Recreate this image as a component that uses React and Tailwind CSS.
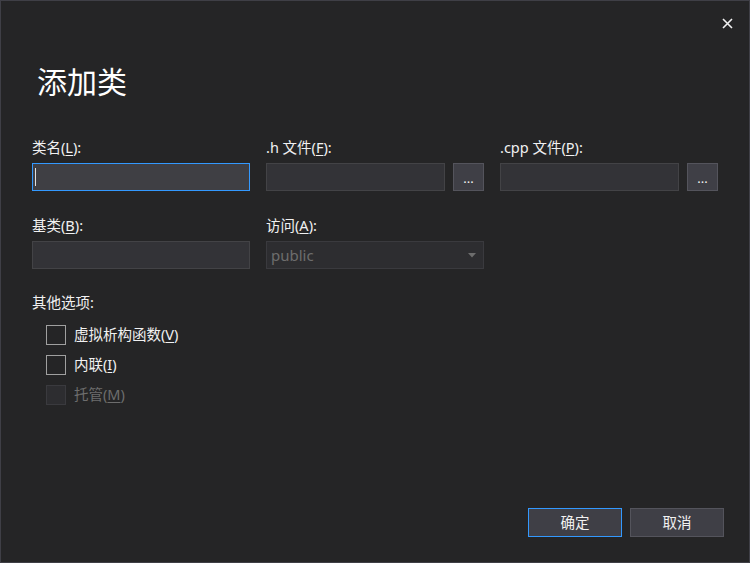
import React from "react";

const font = { fontFamily: '"Noto Sans", "Noto Sans CJK SC", sans-serif' };

function Label({ children }) {
  return <div className="h-5 text-[14.5px] leading-5 text-[#f1f1f1]">{children}</div>;
}

function Key({ children }) {
  return <span className="underline underline-offset-2">{children}</span>;
}

function Browse() {
  return (
    <button className="w-[31px] h-[28px] shrink-0 bg-[#3f3f46] border border-[#54545c] text-[#f1f1f1] text-[13px] leading-none pt-[3px]">
      ...
    </button>
  );
}

function Check({ label, disabled }) {
  return (
    <div className="h-[30px] flex items-center pl-[14px]">
      <div
        className={
          "w-5 h-5 border " +
          (disabled ? "border-[#3a3a3e] bg-[#2d2d30]" : "border-[#a0a0a0] bg-[#252526]")
        }
      />
      <span className={"ml-2 text-[14.5px] " + (disabled ? "text-[#6d6d6d]" : "text-[#f1f1f1]")}>
        {label}
      </span>
    </div>
  );
}

export default function App() {
  return (
    <div style={font} className="w-[750px] h-[563px] bg-[#252526] border border-[#3f3f46] relative flex flex-col text-[#f1f1f1]">
      {/* close */}
      <button className="absolute right-[14px] top-[14px] w-4 h-4 flex items-center justify-center">
        <svg width="11" height="11" viewBox="0 0 11 11">
          <path d="M1 1L10 10M10 1L1 10" stroke="#f1f1f1" strokeWidth="1.6" />
        </svg>
      </button>

      <div className="pt-[61px] pl-[36px] h-[40px] box-content text-[30px] leading-[40px] text-white">添加类</div>

      <div className="px-[31px] mt-[35px] grid grid-cols-3 gap-x-4">
        <div>
          <Label>
            类名(<Key>L</Key>):
          </Label>
          <div className="mt-[6px] h-[28px] border border-[#3399ff] bg-[#3f3f44] flex items-center pl-[2px]">
            <div className="w-px h-[18px] bg-[#e0e0e0]" />
          </div>
        </div>
        <div>
          <Label>
            .h 文件(<Key>F</Key>):
          </Label>
          <div className="mt-[6px] flex gap-[8px]">
            <div className="flex-1 h-[28px] border border-[#434346] bg-[#333337]" />
            <Browse />
          </div>
        </div>
        <div>
          <Label>
            .cpp 文件(<Key>P</Key>):
          </Label>
          <div className="mt-[6px] flex gap-[8px]">
            <div className="flex-1 h-[28px] border border-[#434346] bg-[#333337]" />
            <Browse />
          </div>
        </div>

        <div className="mt-[24px]">
          <Label>
            基类(<Key>B</Key>):
          </Label>
          <div className="mt-[6px] h-[28px] border border-[#434346] bg-[#333337]" />
        </div>
        <div className="mt-[24px]">
          <Label>
            访问(<Key>A</Key>):
          </Label>
          <div className="mt-[6px] h-[28px] border border-[#3a3a3e] bg-[#2d2d30] flex items-center justify-between pl-[4px] pr-[7px]">
            <span className="text-[15px] text-[#6d6d6d]">public</span>
            <svg width="8" height="5" viewBox="0 0 8 5">
              <path d="M0 0H8L4 4.5Z" fill="#6d6d6d" />
            </svg>
          </div>
        </div>
        <div />
      </div>

      <div className="px-[31px] mt-[23px]">
        <Label>其他选项:</Label>
        <div className="mt-[8px]">
          <Check label={<>虚拟析构函数(<Key>V</Key>)</>} />
          <Check label={<>内联(<Key>I</Key>)</>} />
          <Check label={<>托管(<Key>M</Key>)</>} disabled />
        </div>
      </div>

      <div className="mt-auto mb-[25px] mr-[25px] flex justify-end gap-[8px]">
        <button className="w-[94px] h-[29px] border border-[#3399ff] bg-[#3f3f46] text-[14.5px] text-[#f1f1f1]">确定</button>
        <button className="w-[94px] h-[29px] border border-[#54545c] bg-[#3f3f46] text-[14.5px] text-[#f1f1f1]">取消</button>
      </div>
    </div>
  );
}
